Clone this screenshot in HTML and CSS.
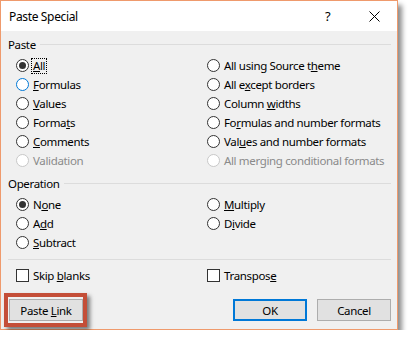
FILE: index.html
```html
<!DOCTYPE html>
<html>
<head>
<meta charset="utf-8">
<link rel="stylesheet" href="styles.css">
</head>
<body>
<div class="dialog">
  <div class="titlebar">
    <span class="title">Paste Special</span>
    <span class="help">?</span>
    <svg class="close" width="11" height="11" viewBox="0 0 11 11"><path d="M0.5 0.5 L10.5 10.5 M10.5 0.5 L0.5 10.5" stroke="#000" stroke-width="1" fill="none"/></svg>
  </div>
  <div class="body">
    <div class="legend"><span>Paste</span><span class="rule"></span></div>
    <div class="options">
      <div class="opt"><span class="radio on"></span><span class="lbl focus"><u>A</u>ll</span></div>
      <div class="opt"><span class="radio"></span><span class="lbl">All using Source t<u>h</u>eme</span></div>
      <div class="opt"><span class="radio hover"></span><span class="lbl"><u>F</u>ormulas</span></div>
      <div class="opt"><span class="radio"></span><span class="lbl">All e<u>x</u>cept borders</span></div>
      <div class="opt"><span class="radio"></span><span class="lbl"><u>V</u>alues</span></div>
      <div class="opt"><span class="radio"></span><span class="lbl">Column <u>w</u>idths</span></div>
      <div class="opt"><span class="radio"></span><span class="lbl">Forma<u>t</u>s</span></div>
      <div class="opt"><span class="radio"></span><span class="lbl">Fo<u>r</u>mulas and number formats</span></div>
      <div class="opt"><span class="radio"></span><span class="lbl"><u>C</u>omments</span></div>
      <div class="opt"><span class="radio"></span><span class="lbl">Val<u>u</u>es and number formats</span></div>
      <div class="opt disabled"><span class="radio"></span><span class="lbl">Validation</span></div>
      <div class="opt disabled"><span class="radio"></span><span class="lbl">All merging conditional formats</span></div>
    </div>
    <div class="legend op"><span>Operation</span><span class="rule"></span></div>
    <div class="options">
      <div class="opt"><span class="radio on"></span><span class="lbl">N<u>o</u>ne</span></div>
      <div class="opt"><span class="radio"></span><span class="lbl"><u>M</u>ultiply</span></div>
      <div class="opt"><span class="radio"></span><span class="lbl">A<u>d</u>d</span></div>
      <div class="opt"><span class="radio"></span><span class="lbl">D<u>i</u>vide</span></div>
      <div class="opt"><span class="radio"></span><span class="lbl"><u>S</u>ubtract</span></div>
      <div class="opt"></div>
    </div>
    <div class="sep"></div>
    <div class="options checks">
      <div class="opt"><span class="check"></span><span class="lbl">Skip <u>b</u>lanks</span></div>
      <div class="opt"><span class="check"></span><span class="lbl">Transpos<u>e</u></span></div>
    </div>
    <div class="buttons">
      <div class="btn-wrap">
        <button class="btn">Paste <u>L</u>ink</button>
        <span class="highlight"></span>
      </div>
      <span class="spacer"></span>
      <button class="btn default">OK</button>
      <button class="btn">Cancel</button>
    </div>
  </div>
</div>
</body>
</html>
```

FILE: styles.css
```css
html, body {
  margin: 0;
  padding: 0;
  background: #ffffff;
}
body {
  font-family: "Noto Sans", "Open Sans", sans-serif;
  font-size: 11.5px;
  letter-spacing: -0.35px;
  color: #000;
}
.dialog {
  width: 396px;
  height: 328px;
  border: 1px solid #ef9a6c;
  background: #f0f0f0;
  box-shadow: 4px 5px 5px rgba(0, 0, 0, 0.45);
  display: flex;
  flex-direction: column;
}
.titlebar {
  height: 30px;
  background: #ffffff;
  display: flex;
  align-items: center;
  padding-left: 8px;
  font-size: 12px;
}
.title {
  flex: 1;
}
.help {
  width: 10px;
  margin-right: 34px;
  font-size: 13px;
}
.close {
  margin-right: 17px;
}
.body {
  padding: 5px 6px 0 7px;
  display: flex;
  flex-direction: column;
}
.legend {
  display: flex;
  align-items: center;
  height: 16px;
  gap: 4px;
}
.legend .rule {
  flex: 1;
  height: 1px;
  background: #dcdcdc;
}
.legend.op {
  margin-top: 5px;
}
.options {
  display: grid;
  grid-template-columns: 191px 1fr;
  grid-auto-rows: 19px;
  margin-left: 8px;
  margin-top: 4px;
}
.opt {
  display: flex;
  align-items: center;
  gap: 4px;
}
.radio {
  width: 13px;
  height: 13px;
  box-sizing: border-box;
  border: 1px solid #333;
  border-radius: 50%;
  background: #fff;
  display: flex;
  align-items: center;
  justify-content: center;
  flex: none;
}
.radio.on::after {
  content: "";
  width: 7px;
  height: 7px;
  border-radius: 50%;
  background: #333;
}
.radio.hover {
  border-color: #0078d7;
}
.check {
  width: 13px;
  height: 13px;
  box-sizing: border-box;
  border: 1px solid #333;
  background: #fff;
  flex: none;
}
.lbl {
  white-space: nowrap;
}
.lbl u {
  text-underline-offset: 1px;
}
.focus {
  outline: 1px dotted #000;
  outline-offset: 0;
  padding: 0 1px;
  margin-left: -1px;
  line-height: 14px;
}
.disabled .lbl {
  color: #8a8a8a;
}
.disabled .radio {
  border-color: #c8c8c8;
}
.sep {
  height: 1px;
  background: #dcdcdc;
  margin-top: 7px;
}
.checks {
  margin-top: 6px;
}
.buttons {
  display: flex;
  align-items: center;
  margin-top: 14px;
  padding-left: 1px;
  gap: 10px;
}
.spacer {
  flex: 1;
}
.btn-wrap {
  position: relative;
  display: flex;
}
.btn {
  width: 74px;
  height: 22px;
  box-sizing: border-box;
  border: 1px solid #adadad;
  background: #e1e1e1;
  font-family: inherit;
  font-size: 11.5px;
  letter-spacing: -0.35px;
  color: #000;
  padding: 0;
  margin: 0;
}
.btn.default {
  border: 2px solid #0078d7;
}
.highlight {
  position: absolute;
  left: -5px;
  top: -6px;
  width: 75px;
  height: 26px;
  border: 4px solid #c44e38;
  box-shadow: 3px 3px 4px rgba(0, 0, 0, 0.5);
}
```
